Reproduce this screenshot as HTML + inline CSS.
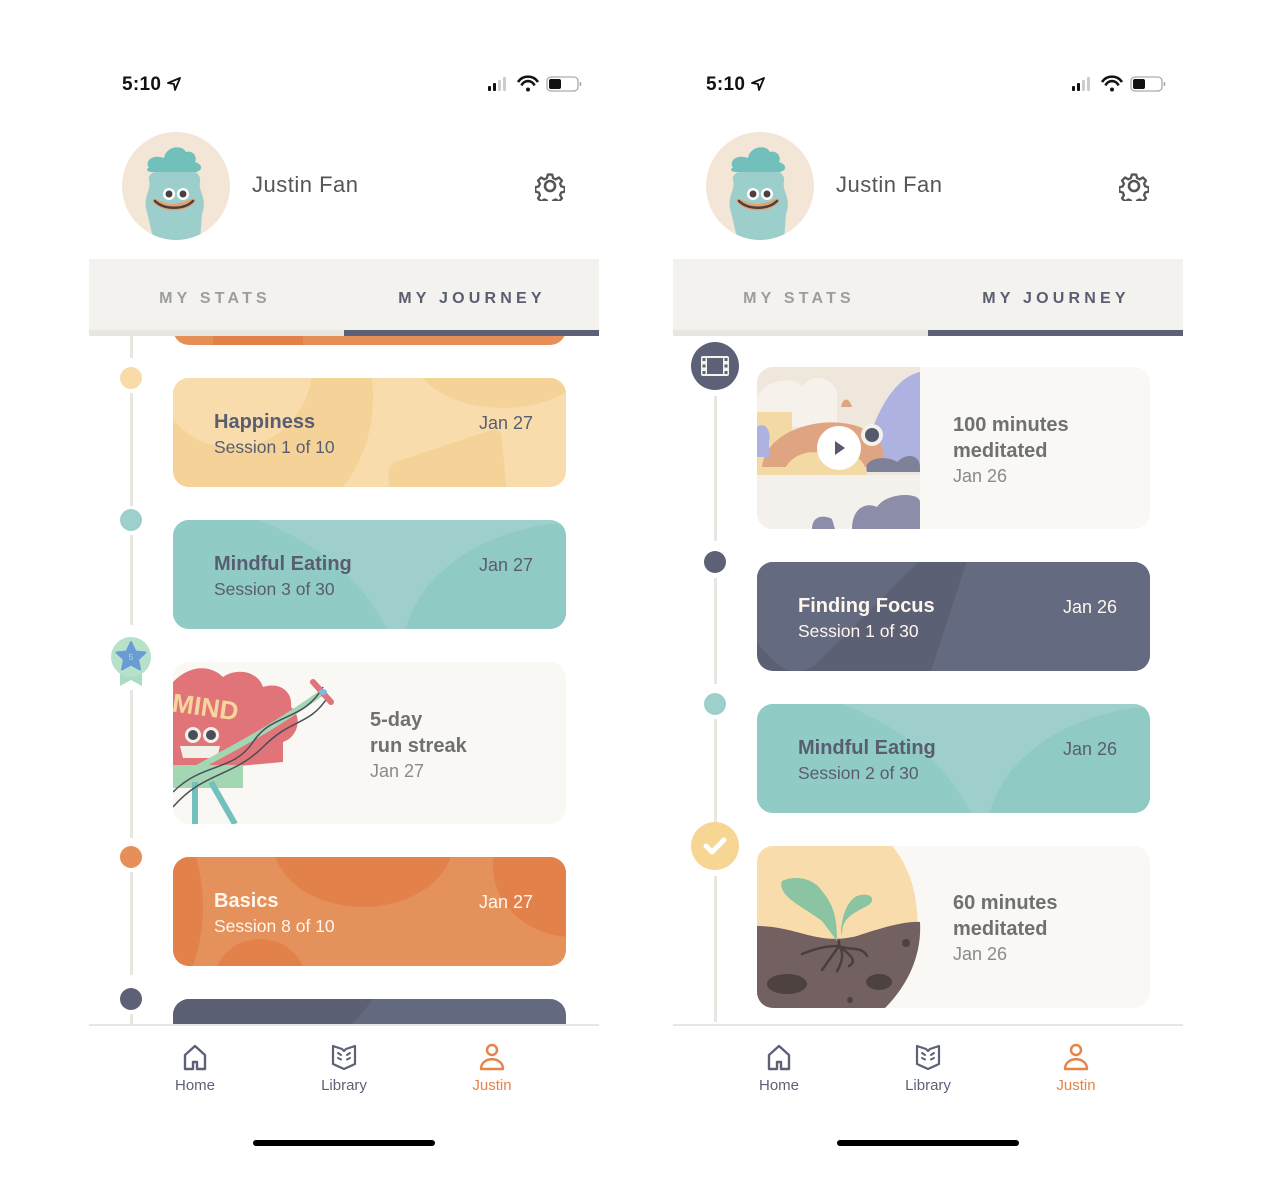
<!DOCTYPE html>
<html><head><meta charset="utf-8">
<style>
*{margin:0;padding:0;box-sizing:border-box}
body{width:1262px;height:1182px;background:#fff;font-family:"Liberation Sans",sans-serif;position:relative;overflow:hidden}
.ph{position:absolute;top:0;width:510px;height:1182px}
.a{position:absolute}
.time{left:33px;top:74px;font-size:19px;color:#111;letter-spacing:.3px;font-weight:600}
.name{left:163px;top:172px;font-size:22px;color:#555;letter-spacing:.5px}
.tabs{left:0;top:259px;width:510px;height:72px;background:#f3f2ee}
.tab{top:290px;font-size:16px;font-weight:bold;letter-spacing:4.2px;transform:translateX(-50%);white-space:nowrap}
.content{left:0;top:336px;width:510px;height:689px;overflow:hidden}
.ln{position:absolute;left:41px;width:3px;background:#e8e6e1}
.dot{position:absolute;left:31px;width:22px;height:22px;border-radius:50%}
.card{position:absolute;left:84px;width:393px;border-radius:16px;overflow:hidden}
.blob{position:absolute;border-radius:50%}
.t1{position:absolute;left:41px;top:33px;font-size:20px;font-weight:bold;color:#595d70}
.t2{position:absolute;left:41px;top:59px;font-size:17.5px;color:#595d70}
.dt{position:absolute;right:33px;top:35px;font-size:18px;color:#595d70}
.w .t1,.w .t2,.w .dt{color:#fff6ee}
.ach{position:absolute;font-size:20px;font-weight:bold;color:#707070;line-height:26px}
.ach span{display:block;font-weight:normal;font-size:18px;color:#8a8a8a;line-height:24px}
.nav{top:1024px;left:0;width:510px;height:2px;background:#e8e6e1}
.nl{top:1077px;font-size:15px;color:#5d6178;transform:translateX(-50%)}
.hi{left:164px;top:1140px;width:182px;height:6px;border-radius:3px;background:#000}
</style></head><body>

<!-- ============ LEFT PHONE ============ -->
<div class="ph" style="left:89px">
 <div class="a time">5:10 <svg width="14" height="14" viewBox="0 0 14 14" style="vertical-align:-1px"><path d="M13 1 L1 6 L7 7 L8 13 Z" fill="none" stroke="#111" stroke-width="1.8" stroke-linejoin="round"/></svg></div>
 <svg class="a" style="left:399px;top:75px" width="95" height="18" viewBox="0 0 95 18">
  <rect x="0" y="11" width="3" height="5" rx="1" fill="#111"/><rect x="5" y="8" width="3" height="8" rx="1" fill="#111"/><rect x="10" y="5" width="3" height="11" rx="1" fill="#ccc"/><rect x="15" y="2" width="3" height="14" rx="1" fill="#ccc"/>
  <path d="M30 7 A12 12 0 0 1 50 7" fill="none" stroke="#111" stroke-width="2.6"/><path d="M33.5 10.5 A7 7 0 0 1 46.5 10.5" fill="none" stroke="#111" stroke-width="2.6"/><circle cx="40" cy="14.5" r="2" fill="#111"/>
  <rect x="59" y="2" width="31" height="14" rx="4" fill="none" stroke="#aaa" stroke-width="1.3"/><rect x="61" y="4" width="12" height="10" rx="2" fill="#111"/><rect x="91.5" y="7" width="1.8" height="4" rx="1" fill="#aaa"/>
 </svg>
 <svg class="a" style="left:33px;top:132px" width="108" height="108" viewBox="0 0 108 108">
  <defs><clipPath id="c1"><circle cx="54" cy="54" r="54"/></clipPath></defs>
  <circle cx="54" cy="54" r="54" fill="#f3e6d6"/>
  <g clip-path="url(#c1)">
   <path d="M25 80 C20 65 30 58 27 48 C25 40 40 36 54 36 C68 36 80 40 78 50 C76 60 86 66 80 82 L78 110 L32 110 Z" fill="#9ccfcb"/>
   <path d="M27 36 C22 28 32 22 42 26 C44 14 60 12 64 20 C70 18 76 24 73 30 C80 32 82 38 74 40 L30 40 C24 40 24 36 27 36 Z" fill="#72c0bb"/>
   <path d="M30 68 C38 82 66 82 74 68 C70 64 68 70 52 72 C38 72 34 64 30 68 Z" fill="#e7a06e"/>
   <path d="M33 69 C42 78 62 78 71 69" fill="none" stroke="#4a4040" stroke-width="2.5" stroke-linecap="round"/>
   <circle cx="47" cy="62" r="6" fill="#fff"/><circle cx="61" cy="62" r="6" fill="#fff"/>
   <circle cx="47" cy="62" r="3.5" fill="#4a4040"/><circle cx="61" cy="62" r="3.5" fill="#4a4040"/>
  </g>
 </svg>
 <div class="a name">Justin Fan</div>
 <svg class="a" style="left:446px;top:171px" width="30" height="30" viewBox="0 0 30 30">
  <path d="M12.5 2 h5 l1 4 l3 1.5 l3.6-2.2 l3.5 3.5 l-2.2 3.6 l1.3 3 l4 1 v5 l-4 1 l-1.3 3 l2.2 3.6 l-3.5 3.5 l-3.6-2.2 l-3 1.3 l-1 4 h-5 l-1-4 l-3-1.3 l-3.6 2.2 l-3.5-3.5 l2.2-3.6 l-1.3-3 l-4-1 v-5 l4-1 l1.3-3 l-2.2-3.6 l3.5-3.5 l3.6 2.2 l3-1.5 z" transform="translate(15 15) scale(.88) translate(-15 -15)" fill="none" stroke="#555" stroke-width="2.6" stroke-linejoin="round"/>
  <circle cx="15" cy="15" r="5" fill="none" stroke="#555" stroke-width="2.6"/>
 </svg>
 <div class="a tabs"></div>
 <div class="a tab" style="left:126px;color:#9d9d9d">MY STATS</div>
 <div class="a tab" style="left:383px;color:#5a5e70">MY JOURNEY</div>
 <div class="a" style="left:0;top:330px;width:255px;height:6px;background:#e8e6e1"></div>
 <div class="a" style="left:255px;top:330px;width:255px;height:6px;background:#5d6178"></div>

 <div class="a content">
  <div class="ln" style="top:0;height:22px"></div>
  <div class="card" style="top:-60px;height:69px;background:#e68f58"><div class="blob" style="left:40px;top:20px;width:90px;height:120px;background:#e3814b;border-radius:20px"></div></div>

  <div class="dot" style="top:31px;background:#f8dba8"></div>
  <div class="ln" style="top:57px;height:113px"></div>
  <div class="card" style="top:42px;height:109px;background:#f8dcab">
   <div class="blob" style="left:-60px;top:-120px;width:260px;height:280px;background:#f5d398"></div>
   <div class="blob" style="left:-20px;top:-100px;width:160px;height:170px;background:#f8dcab"></div>
   <div class="blob" style="left:240px;top:-80px;width:180px;height:110px;background:#f5d398"></div>
   <div style="position:absolute;left:220px;top:65px;width:110px;height:90px;background:#f5d398;transform:skewX(-15deg) rotate(-20deg);border-radius:10px"></div>
   <div class="t1">Happiness</div><div class="t2">Session 1 of 10</div><div class="dt">Jan 27</div>
  </div>

  <div class="dot" style="top:173px;background:#9dcfcb"></div>
  <div class="ln" style="top:199px;height:90px"></div>
  <div class="card" style="top:184px;height:109px;background:#9fcfcc">
   <div class="blob" style="left:-200px;top:-20px;width:430px;height:330px;background:#90cbc6;border-radius:0 60% 0 0"></div>
   <div class="blob" style="left:230px;top:2px;width:360px;height:260px;background:#90cac5"></div>
   <div class="t1">Mindful Eating</div><div class="t2">Session 3 of 30</div><div class="dt">Jan 27</div>
  </div>

  <svg class="a" style="left:21px;top:300px" width="42" height="52" viewBox="0 0 42 52">
   <path d="M10 30 L10 50 L21 44 L32 50 L32 30 Z" fill="#a9dcc0"/>
   <circle cx="21" cy="21" r="20" fill="#b5e2c9"/>
   <path d="M21 6 L25.5 15.5 L35.5 16.5 L28 23.5 L30 33.5 L21 28.5 L12 33.5 L14 23.5 L6.5 16.5 L16.5 15.5 Z" fill="#6a9bd6" stroke="#6a9bd6" stroke-width="2" stroke-linejoin="round"/>
   <text x="21" y="24" font-size="8" fill="#b5e2c9" text-anchor="middle" font-family="Liberation Sans">5</text>
  </svg>
  <div class="ln" style="top:354px;height:148px"></div>
  <div class="card" style="top:326px;height:162px;background:#f9f8f5">
   <svg class="a" style="left:0;top:0" width="170" height="162" viewBox="0 0 170 162">
    <path d="M0 20 C20 0 40 5 50 15 C65 5 85 10 90 25 C105 20 120 28 118 45 C130 55 125 75 110 80 L110 100 L0 110 Z" fill="#e07479"/>
    <rect x="0" y="103" width="70" height="23" fill="#a3d6b3"/>
    <path d="M22 120 L22 162 M38 120 L62 162" stroke="#72c1bc" stroke-width="6"/>
    <text x="0" y="55" font-size="26" font-weight="bold" fill="#f7d69b" font-family="Liberation Sans" transform="rotate(8 40 40)">MIND</text>
    <circle cx="20" cy="73" r="8" fill="#f4f0ea"/><circle cx="38" cy="73" r="8" fill="#f4f0ea"/>
    <circle cx="20" cy="73" r="5" fill="#4a4d5a"/><circle cx="38" cy="73" r="5" fill="#4a4d5a"/>
    <path d="M7 84 h40 l-3 12 h-34 z" fill="#f4f0ea"/>
    <path d="M0 120 C40 95 80 80 150 30" stroke="#a3d6b3" stroke-width="6" fill="none"/>
    <path d="M0 130 C30 100 60 110 80 80 S130 60 150 25 M0 145 C30 110 60 115 90 85 S135 65 155 35" stroke="#4a4d5a" stroke-width="1.5" fill="none"/>
    <path d="M140 20 L158 40" stroke="#e07479" stroke-width="6" stroke-linecap="round"/>
    <ellipse cx="150" cy="30" rx="4" ry="3" fill="#7bbbe0"/>
   </svg>
   <div class="ach" style="left:197px;top:45px">5-day<br>run streak<span>Jan 27</span></div>
  </div>

  <div class="dot" style="top:510px;background:#e68f58"></div>
  <div class="ln" style="top:536px;height:103px"></div>
  <div class="card w" style="top:521px;height:109px;background:#e5915b">
   <div class="blob" style="left:-100px;top:-60px;width:130px;height:220px;background:#e3814b"></div>
   <div class="blob" style="left:100px;top:-80px;width:180px;height:130px;background:#e3814b"></div>
   <div class="blob" style="left:320px;top:-60px;width:160px;height:140px;background:#e3814b"></div>
   <div class="blob" style="left:42px;top:82px;width:90px;height:80px;background:#e3814b"></div>
   <div class="t1">Basics</div><div class="t2">Session 8 of 10</div><div class="dt">Jan 27</div>
  </div>

  <div class="dot" style="top:652px;background:#5d6178"></div>
  <div class="ln" style="top:678px;height:20px"></div>
  <div class="card" style="top:663px;height:109px;background:#636a80"><div class="blob" style="left:-40px;top:-200px;width:260px;height:260px;background:#5b6075"></div></div>
 </div>

 <div class="a nav"></div>
 <svg class="a" style="left:93px;top:1043px" width="26" height="28" viewBox="0 0 26 28"><path d="M3 26 V12 L13 3 L23 12 V26 H15 V19 H11 V26 Z" fill="none" stroke="#5d6178" stroke-width="2.4" stroke-linejoin="round"/></svg>
 <svg class="a" style="left:242px;top:1043px" width="26" height="28" viewBox="0 0 26 28"><path d="M2 3 L11 6 L13 8 L15 6 L24 3 V21 L13 26 L2 21 Z" fill="none" stroke="#5d6178" stroke-width="2.2" stroke-linejoin="round"/><path d="M7 10 l3 2 M7 15 l3 1.5 M19 10 l-3 2 M19 15 l-3 1.5" stroke="#5d6178" stroke-width="2" stroke-linecap="round"/></svg>
 <svg class="a" style="left:390px;top:1043px" width="26" height="28" viewBox="0 0 26 28"><circle cx="13" cy="7" r="5" fill="none" stroke="#e68448" stroke-width="2.4"/><path d="M2 26 C2 13 24 13 24 26 Z" fill="none" stroke="#e68448" stroke-width="2.4" stroke-linejoin="round"/></svg>
 <div class="a nl" style="left:106px">Home</div>
 <div class="a nl" style="left:255px">Library</div>
 <div class="a nl" style="left:403px;color:#e68448">Justin</div>
 <div class="a hi"></div>
</div>

<!-- ============ RIGHT PHONE ============ -->
<div class="ph" style="left:673px">
 <div class="a time">5:10 <svg width="14" height="14" viewBox="0 0 14 14" style="vertical-align:-1px"><path d="M13 1 L1 6 L7 7 L8 13 Z" fill="none" stroke="#111" stroke-width="1.8" stroke-linejoin="round"/></svg></div>
 <svg class="a" style="left:399px;top:75px" width="95" height="18" viewBox="0 0 95 18">
  <rect x="0" y="11" width="3" height="5" rx="1" fill="#111"/><rect x="5" y="8" width="3" height="8" rx="1" fill="#111"/><rect x="10" y="5" width="3" height="11" rx="1" fill="#ccc"/><rect x="15" y="2" width="3" height="14" rx="1" fill="#ccc"/>
  <path d="M30 7 A12 12 0 0 1 50 7" fill="none" stroke="#111" stroke-width="2.6"/><path d="M33.5 10.5 A7 7 0 0 1 46.5 10.5" fill="none" stroke="#111" stroke-width="2.6"/><circle cx="40" cy="14.5" r="2" fill="#111"/>
  <rect x="59" y="2" width="31" height="14" rx="4" fill="none" stroke="#aaa" stroke-width="1.3"/><rect x="61" y="4" width="12" height="10" rx="2" fill="#111"/><rect x="91.5" y="7" width="1.8" height="4" rx="1" fill="#aaa"/>
 </svg>
 <svg class="a" style="left:33px;top:132px" width="108" height="108" viewBox="0 0 108 108">
  <defs><clipPath id="c2"><circle cx="54" cy="54" r="54"/></clipPath></defs>
  <circle cx="54" cy="54" r="54" fill="#f3e6d6"/>
  <g clip-path="url(#c2)">
   <path d="M25 80 C20 65 30 58 27 48 C25 40 40 36 54 36 C68 36 80 40 78 50 C76 60 86 66 80 82 L78 110 L32 110 Z" fill="#9ccfcb"/>
   <path d="M27 36 C22 28 32 22 42 26 C44 14 60 12 64 20 C70 18 76 24 73 30 C80 32 82 38 74 40 L30 40 C24 40 24 36 27 36 Z" fill="#72c0bb"/>
   <path d="M30 68 C38 82 66 82 74 68 C70 64 68 70 52 72 C38 72 34 64 30 68 Z" fill="#e7a06e"/>
   <path d="M33 69 C42 78 62 78 71 69" fill="none" stroke="#4a4040" stroke-width="2.5" stroke-linecap="round"/>
   <circle cx="47" cy="62" r="6" fill="#fff"/><circle cx="61" cy="62" r="6" fill="#fff"/>
   <circle cx="47" cy="62" r="3.5" fill="#4a4040"/><circle cx="61" cy="62" r="3.5" fill="#4a4040"/>
  </g>
 </svg>
 <div class="a name">Justin Fan</div>
 <svg class="a" style="left:446px;top:171px" width="30" height="30" viewBox="0 0 30 30">
  <path d="M12.5 2 h5 l1 4 l3 1.5 l3.6-2.2 l3.5 3.5 l-2.2 3.6 l1.3 3 l4 1 v5 l-4 1 l-1.3 3 l2.2 3.6 l-3.5 3.5 l-3.6-2.2 l-3 1.3 l-1 4 h-5 l-1-4 l-3-1.3 l-3.6 2.2 l-3.5-3.5 l2.2-3.6 l-1.3-3 l-4-1 v-5 l4-1 l1.3-3 l-2.2-3.6 l3.5-3.5 l3.6 2.2 l3-1.5 z" transform="translate(15 15) scale(.88) translate(-15 -15)" fill="none" stroke="#555" stroke-width="2.6" stroke-linejoin="round"/>
  <circle cx="15" cy="15" r="5" fill="none" stroke="#555" stroke-width="2.6"/>
 </svg>
 <div class="a tabs"></div>
 <div class="a tab" style="left:126px;color:#9d9d9d">MY STATS</div>
 <div class="a tab" style="left:383px;color:#5a5e70">MY JOURNEY</div>
 <div class="a" style="left:0;top:330px;width:255px;height:6px;background:#e8e6e1"></div>
 <div class="a" style="left:255px;top:330px;width:255px;height:6px;background:#5d6178"></div>

 <div class="a content">
  <svg class="a" style="left:18px;top:6px" width="48" height="48" viewBox="0 0 48 48"><circle cx="24" cy="24" r="24" fill="#5d6178"/><rect x="10" y="14" width="28" height="20" rx="2" fill="#f4f3ef"/><rect x="16" y="16" width="16" height="16" fill="#5d6178"/><g fill="#5d6178"><rect x="11.5" y="16" width="3" height="3"/><rect x="11.5" y="22.5" width="3" height="3"/><rect x="11.5" y="29" width="3" height="3"/><rect x="33.5" y="16" width="3" height="3"/><rect x="33.5" y="22.5" width="3" height="3"/><rect x="33.5" y="29" width="3" height="3"/></g></svg>
  <div class="ln" style="top:60px;height:145px"></div>
  <div class="card" style="top:31px;height:162px;background:#f9f8f5">
   <svg class="a" style="left:0;top:0" width="163" height="162" viewBox="0 0 163 162">
    <rect width="163" height="162" fill="#efe6dc"/>
    <path d="M0 30 C10 10 40 10 45 20 C55 5 75 10 80 25 L80 60 L0 60 Z" fill="#f6f1ea"/>
    <path d="M110 80 C120 40 140 10 163 5 L163 100 L110 100 Z" fill="#aeb2e0"/>
    <rect x="0" y="45" width="35" height="80" fill="#f3d9a4"/>
    <path d="M5 100 C10 50 110 40 125 80 L130 100 Z" fill="#dfa582"/>
    <path d="M84 40 C86 30 92 30 95 40 Z" fill="#dfa582"/>
    <path d="M25 110 C30 85 60 80 70 90 C90 80 110 90 110 110 Z" fill="#f3d9a4"/>
    <path d="M110 105 C105 90 130 88 140 95 C150 85 163 88 163 100 L163 105 Z" fill="#7f8199"/>
    <rect x="0" y="108" width="163" height="54" fill="#f4f1ec"/>
    <path d="M0 60 C5 55 15 60 12 75 L12 90 L0 90 Z" fill="#aeb2e0"/>
    <path d="M95 162 C95 140 110 135 120 140 C130 125 163 125 163 135 L163 162 Z" fill="#8c8ea9"/>
    <path d="M55 162 C55 150 65 147 75 152 L78 162 Z" fill="#8c8ea9"/>
    <circle cx="115" cy="68" r="11" fill="#f4f1ec"/><circle cx="115" cy="68" r="7" fill="#555a6c"/>
    <circle cx="82" cy="81" r="22" fill="#fff"/><path d="M78 74 L88 81 L78 88 Z" fill="#555a6c"/>
   </svg>
   <div class="ach" style="left:196px;top:45px">100 minutes<br>meditated<span>Jan 26</span></div>
  </div>

  <div class="dot" style="top:215px;background:#5d6178"></div>
  <div class="ln" style="top:242px;height:106px"></div>
  <div class="card w" style="top:226px;height:109px;background:#5c6075">
   <div style="position:absolute;left:190px;top:-10px;width:300px;height:140px;background:#646a80;transform:skewX(-18deg)"></div>
   <div class="blob" style="left:-60px;top:-120px;width:200px;height:200px;background:#646a80;transform:rotate(45deg);border-radius:30px"></div>
   <div class="t1">Finding Focus</div><div class="t2">Session 1 of 30</div><div class="dt">Jan 26</div>
  </div>

  <div class="dot" style="top:357px;background:#9dcfcb"></div>
  <div class="ln" style="top:383px;height:106px"></div>
  <div class="card" style="top:368px;height:109px;background:#9fcfcc">
   <div class="blob" style="left:-200px;top:-20px;width:430px;height:330px;background:#90cbc6;border-radius:0 60% 0 0"></div>
   <div class="blob" style="left:230px;top:2px;width:360px;height:260px;background:#90cac5"></div>
   <div class="t1">Mindful Eating</div><div class="t2">Session 2 of 30</div><div class="dt">Jan 26</div>
  </div>

  <svg class="a" style="left:18px;top:486px" width="48" height="48" viewBox="0 0 48 48"><circle cx="24" cy="24" r="24" fill="#f7d593"/><path d="M15 24 L21 30 L33 18" fill="none" stroke="#fff" stroke-width="5" stroke-linecap="round" stroke-linejoin="round"/></svg>
  <div class="ln" style="top:540px;height:146px"></div>
  <div class="card" style="top:510px;height:162px;background:#f9f8f5">
   <svg class="a" style="left:0;top:0" width="170" height="162" viewBox="0 0 170 162">
    <path d="M0 0 H135 C170 40 170 120 128 162 H0 Z" fill="#f8dcab"/>
    <path d="M0 80 C40 80 60 100 100 90 C130 80 150 75 163 76 C165 110 150 140 128 162 H0 Z" fill="#726160"/>
    <path d="M80 95 C80 75 78 60 65 45 C55 30 35 30 25 35 C20 50 45 60 65 75 Z" fill="#8bc4a2"/>
    <path d="M85 90 C85 75 90 70 110 60 C120 55 115 45 100 50 C90 55 85 70 84 85 Z" fill="#8bc4a2"/>
    <path d="M82 95 L82 100 M82 100 C75 100 65 100 45 108 M82 100 L65 124 M82 100 C90 110 80 125 80 125 M82 100 C95 105 105 100 110 110 M82 100 C95 110 100 115 92 120" stroke="#4a3f3e" stroke-width="2.5" fill="none" stroke-linecap="round"/>
    <ellipse cx="30" cy="138" rx="20" ry="10" fill="#4d4240"/><ellipse cx="122" cy="136" rx="13" ry="8" fill="#4d4240"/>
    <circle cx="149" cy="97" r="4" fill="#4d4240"/><circle cx="93" cy="154" r="3" fill="#4d4240"/>
   </svg>
   <div class="ach" style="left:196px;top:44px">60 minutes<br>meditated<span>Jan 26</span></div>
  </div>
 </div>

 <div class="a nav"></div>
 <svg class="a" style="left:93px;top:1043px" width="26" height="28" viewBox="0 0 26 28"><path d="M3 26 V12 L13 3 L23 12 V26 H15 V19 H11 V26 Z" fill="none" stroke="#5d6178" stroke-width="2.4" stroke-linejoin="round"/></svg>
 <svg class="a" style="left:242px;top:1043px" width="26" height="28" viewBox="0 0 26 28"><path d="M2 3 L11 6 L13 8 L15 6 L24 3 V21 L13 26 L2 21 Z" fill="none" stroke="#5d6178" stroke-width="2.2" stroke-linejoin="round"/><path d="M7 10 l3 2 M7 15 l3 1.5 M19 10 l-3 2 M19 15 l-3 1.5" stroke="#5d6178" stroke-width="2" stroke-linecap="round"/></svg>
 <svg class="a" style="left:390px;top:1043px" width="26" height="28" viewBox="0 0 26 28"><circle cx="13" cy="7" r="5" fill="none" stroke="#e68448" stroke-width="2.4"/><path d="M2 26 C2 13 24 13 24 26 Z" fill="none" stroke="#e68448" stroke-width="2.4" stroke-linejoin="round"/></svg>
 <div class="a nl" style="left:106px">Home</div>
 <div class="a nl" style="left:255px">Library</div>
 <div class="a nl" style="left:403px;color:#e68448">Justin</div>
 <div class="a hi"></div>
</div>
</body></html>
